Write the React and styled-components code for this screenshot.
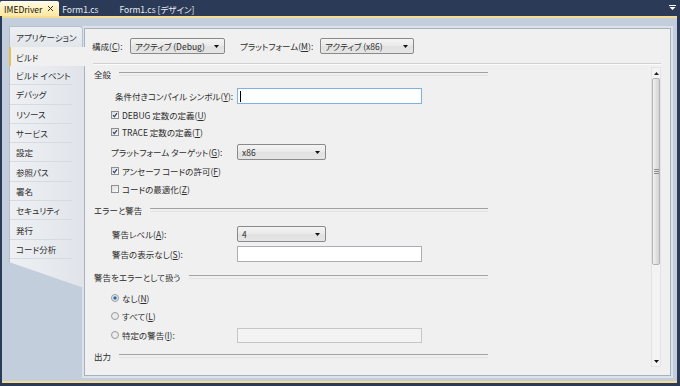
import React from "react";
import styled, { createGlobalStyle } from "styled-components";

const GlobalStyle = createGlobalStyle`
  html, body { margin: 0; padding: 0; }
  body {
    width: 680px; height: 386px; overflow: hidden;
    background: #2b3a57;
    font-family: "Noto Sans CJK JP", "Noto Sans", sans-serif;
    font-size: 8.5px;
    font-feature-settings: "palt";
    color: #2e2e2e;
  }
  * { box-sizing: border-box; }
`;

const Window = styled.div`
  width: 680px; height: 386px;
  display: flex; flex-direction: column;
  background: #2b3a57;
`;

const TabStrip = styled.div`
  height: 16px; flex: none;
  display: flex; align-items: flex-end;
`;

const DocTab = styled.div`
  height: ${(p) => (p.$active ? 15 : 14)}px;
  display: flex; align-items: center; gap: 6px;
  padding: ${(p) => (p.$active ? "0 6px 0 4px" : "0")};
  margin-left: ${(p) => p.$ml || 0}px;
  border-radius: 2px 2px 0 0;
  background: ${(p) => (p.$active ? "linear-gradient(#fffcf0, #fff0b8 55%, #ffe8a6)" : "transparent")};
  color: ${(p) => (p.$active ? "#111" : "#e6ebf3")};
  white-space: nowrap;
`;

const TabMenu = styled.div`
  margin: 0 4px 0 auto; align-self: center;
  width: 7px; height: 6px; display: flex;
`;

const Frame = styled.div`
  flex: 1; min-height: 0;
  margin: 0 3px 3px 2px;
  border-top: 2px solid #f6db92;
  border-bottom: 2px solid #f6db92;
  background: #c3cedc;
  display: flex; align-items: flex-start;
  padding: 0 6px 0 7px;
`;

const Sidebar = styled.div`
  width: 75px; flex: none; margin-top: 8px;
  position: relative; z-index: 2;
  display: flex; flex-direction: column;
`;

const TopTab = styled.div`
  height: 21px; display: flex; align-items: center; padding-left: 6px;
  background: linear-gradient(#eef0f3, #e2e6eb);
  border: 1px solid #b6c0cd; border-bottom: none;
  border-radius: 0 4px 0 0;
  margin-right: 1px;
`;

const SelectedTab = styled.div`
  height: 19px; display: flex; align-items: center; padding-left: 5px;
  background: #f0f0f0;
  border-left: 2px solid #e9bd5b;
  margin-right: -1px;
`;

const NavPanel = styled.div`
  height: 222px;
  background: linear-gradient(to right, #eef0f3, #e0e4ea);
  border-left: 1px solid #b6c0cd;
  clip-path: polygon(0 0, 100% 0, 100% 100%, 0 calc(100% - 26px));
`;

const NavItem = styled.div`
  height: 19.3px; display: flex; align-items: center; padding-left: 6px;
  margin-right: 12px;
  border-bottom: 1px solid #d6dbe2;
`;

const Panel = styled.div`
  flex: 1; align-self: stretch;
  margin: 10px 0 5px 0;
  background: #f0f0f0;
  border: 1px solid #a7b1bf;
  box-shadow: 0 0 0 2px #dce2ea;
  display: flex; flex-direction: column;
`;

const Toolbar = styled.div`
  height: 34px; flex: none;
  display: flex; align-items: center;
  padding-left: 7px;
`;

const ToolLabel = styled.span`
  width: ${(p) => p.$w}px; margin-left: ${(p) => p.$ml || 0}px;
  flex: none; white-space: nowrap;
`;

const Divider = styled.div`
  flex: none; height: 2px;
  margin: 0 9px 0 8px;
  border-top: 1px solid #d0d0d0;
  border-bottom: 1px solid #fbfbfb;
`;

const Body = styled.div`
  flex: 1; min-height: 0; display: flex;
`;

const Form = styled.div`
  flex: 1; padding: 1px 0 0 9px;
  display: flex; flex-direction: column;
`;

const Row = styled.div`
  height: 16px; flex: none;
  margin-top: ${(p) => p.$mt || 0}px;
  display: flex; align-items: center;
  white-space: nowrap;
`;

const GroupHeading = styled(Row)`
  width: 394px; gap: 8px;
  &::after {
    content: ""; flex: 1; height: 2px;
    border-top: 1px solid #a3a3a3; border-bottom: 1px solid #e2e2e2;
  }
`;

const OptionRow = styled(Row)`
  padding-left: 17px; gap: 3px;
`;

const OptionInline = styled.span`
  display: inline-flex; align-items: center; gap: 3px;
`;

const FieldLabel = styled.span`
  width: 143px; flex: none;
  padding-left: ${(p) => p.$indent}px;
`;

const Combo = styled.div`
  width: ${(p) => p.$w}px; height: 16px; flex: none;
  border: 1px solid #8a8a8a; border-radius: 2px;
  background: linear-gradient(#f4f4f4, #e9e9e9 50%, #e1e1e1 51%, #e5e5e5);
  display: flex; align-items: center; justify-content: space-between;
  padding: 0 5px 0 4px;
`;

const TextBox = styled.div`
  width: 185px; height: ${(p) => p.$h || 16}px; flex: none;
  border: 1px solid ${(p) => (p.$focused ? "#7db2e8" : p.$disabled ? "#c6c6c6" : "#abadb3")};
  background: ${(p) => (p.$disabled ? "#f3f3f3" : "#fff")};
  display: flex; align-items: center; padding-left: 2px;
`;

const Caret = styled.span`
  width: 1px; height: 11px; background: #000;
`;

const Acc = styled.u`
  text-decoration: underline; text-underline-offset: 1px;
`;

const VScroll = styled.div`
  width: 10px; flex: none;
  margin: 2px 9px 8px 0;
  border: 1px solid #e3e3e3;
  background: #f3f3f3;
  display: flex; flex-direction: column;
`;

const ScrollBtn = styled.div`
  height: 10px; flex: none;
  display: flex; align-items: center; justify-content: center;
`;

const Thumb = styled.div`
  height: 187px; flex: none;
  border: 1px solid #b4b4b4; border-radius: 2px;
  background: linear-gradient(to right, #f3f3f3, #e2e2e2 50%, #d2d2d2);
  display: flex; align-items: center; justify-content: center;
`;

const Track = styled.div`
  flex: 1;
`;

const K = ({ children }) => <Acc>{children}</Acc>;

const Arrow = () => (
  <svg width="5" height="3" viewBox="0 0 5 3">
    <path d="M0 0h5L2.5 3z" fill="#111" />
  </svg>
);

const Check = ({ on }) => (
  <svg width="8" height="8" viewBox="0 0 8 8" style={{ flex: "none" }}>
    <defs>
      <linearGradient id="cbg" x1="0" y1="0" x2="1" y2="1">
        <stop offset="0" stopColor="#dcdcdc" />
        <stop offset="1" stopColor="#fdfdfd" />
      </linearGradient>
    </defs>
    <rect x="0.5" y="0.5" width="7" height="7" fill="url(#cbg)" stroke="#8e8f8f" />
    {on && <path d="M2 4.2 L3.4 5.7 L6 2.2" fill="none" stroke="#30487a" strokeWidth="1.2" />}
  </svg>
);

const Radio = ({ on }) => (
  <svg width="8" height="8" viewBox="0 0 8 8" style={{ flex: "none" }}>
    <circle cx="4" cy="4" r="3.5" fill="#ececec" stroke="#9a9a9a" />
    {on && <circle cx="4" cy="4" r="1.8" fill="#2c6fb7" />}
  </svg>
);

const Grip = () => (
  <svg width="5" height="6" viewBox="0 0 5 6">
    <path d="M0 0.5h5M0 2.5h5M0 4.5h5" stroke="#8d8d8d" strokeWidth="1" />
  </svg>
);

const navItems = ["ビルド イベント", "デバッグ", "リソース", "サービス", "設定", "参照パス", "署名", "セキュリティ", "発行", "コード分析"];

export default function App() {
  return (
    <>
      <GlobalStyle />
      <Window>
        <TabStrip>
          <DocTab $active>
            IMEDriver
            <svg width="5" height="5" viewBox="0 0 5 5">
              <path d="M0 0L5 5M5 0L0 5" stroke="#333" strokeWidth="1" />
            </svg>
          </DocTab>
          <DocTab $ml={3}>Form1.cs</DocTab>
          <DocTab $ml={21}>Form1.cs [デザイン]</DocTab>
          <TabMenu>
            <svg width="7" height="6" viewBox="0 0 7 6">
              <path d="M0 0.5h7" stroke="#fff" strokeWidth="1" />
              <path d="M0.5 2h6L3.5 5z" fill="#fff" />
            </svg>
          </TabMenu>
        </TabStrip>
        <Frame>
          <Sidebar>
            <TopTab>アプリケーション</TopTab>
            <SelectedTab>ビルド</SelectedTab>
            <NavPanel>
              {navItems.map((n) => (
                <NavItem key={n}>{n}</NavItem>
              ))}
            </NavPanel>
          </Sidebar>
          <Panel>
            <Toolbar>
              <ToolLabel $w={38}>
                構成(<K>C</K>):
              </ToolLabel>
              <Combo $w={95}>
                <span>アクティブ (Debug)</span>
                <Arrow />
              </Combo>
              <ToolLabel $w={80} $ml={15}>
                プラットフォーム(<K>M</K>):
              </ToolLabel>
              <Combo $w={94}>
                <span>アクティブ (x86)</span>
                <Arrow />
              </Combo>
            </Toolbar>
            <Divider />
            <Body>
              <Form>
                <GroupHeading>全般</GroupHeading>
                <Row $mt={6}>
                  <FieldLabel $indent={21}>
                    条件付きコンパイル シンボル(<K>Y</K>):
                  </FieldLabel>
                  <TextBox $focused>
                    <Caret />
                  </TextBox>
                </Row>
                <OptionRow $mt={3}>
                  <Check on />
                  <span>
                    DEBUG 定数の定義(<K>U</K>)
                  </span>
                </OptionRow>
                <OptionRow $mt={1}>
                  <Check on />
                  <span>
                    TRACE 定数の定義(<K>T</K>)
                  </span>
                </OptionRow>
                <Row $mt={4}>
                  <FieldLabel $indent={17}>
                    プラットフォーム ターゲット(<K>G</K>):
                  </FieldLabel>
                  <Combo $w={89}>
                    <span>x86</span>
                    <Arrow />
                  </Combo>
                </Row>
                <OptionRow $mt={3}>
                  <Check on />
                  <span>
                    アンセーフ コードの許可(<K>F</K>)
                  </span>
                </OptionRow>
                <OptionRow $mt={2}>
                  <Check />
                  <span>
                    コードの最適化(<K>Z</K>)
                  </span>
                </OptionRow>
                <GroupHeading $mt={5}>エラーと警告</GroupHeading>
                <Row $mt={8}>
                  <FieldLabel $indent={18}>
                    警告レベル(<K>A</K>):
                  </FieldLabel>
                  <Combo $w={89}>
                    <span>4</span>
                    <Arrow />
                  </Combo>
                </Row>
                <Row $mt={4}>
                  <FieldLabel $indent={18}>
                    警告の表示なし(<K>S</K>):
                  </FieldLabel>
                  <TextBox />
                </Row>
                <GroupHeading $mt={7}>警告をエラーとして扱う</GroupHeading>
                <OptionRow $mt={5}>
                  <Radio on />
                  <span>
                    なし(<K>N</K>)
                  </span>
                </OptionRow>
                <OptionRow $mt={2}>
                  <Radio />
                  <span>
                    すべて(<K>L</K>)
                  </span>
                </OptionRow>
                <Row $mt={3}>
                  <FieldLabel $indent={17}>
                    <OptionInline>
                      <Radio />
                      <span>
                        特定の警告(<K>I</K>):
                      </span>
                    </OptionInline>
                  </FieldLabel>
                  <TextBox $disabled $h={15} />
                </Row>
                <GroupHeading $mt={5}>出力</GroupHeading>
              </Form>
              <VScroll>
                <ScrollBtn>
                  <svg width="5" height="3" viewBox="0 0 5 3">
                    <path d="M0 3h5L2.5 0z" fill="#222" />
                  </svg>
                </ScrollBtn>
                <Thumb>
                  <Grip />
                </Thumb>
                <Track />
                <ScrollBtn>
                  <Arrow />
                </ScrollBtn>
              </VScroll>
            </Body>
          </Panel>
        </Frame>
      </Window>
    </>
  );
}
